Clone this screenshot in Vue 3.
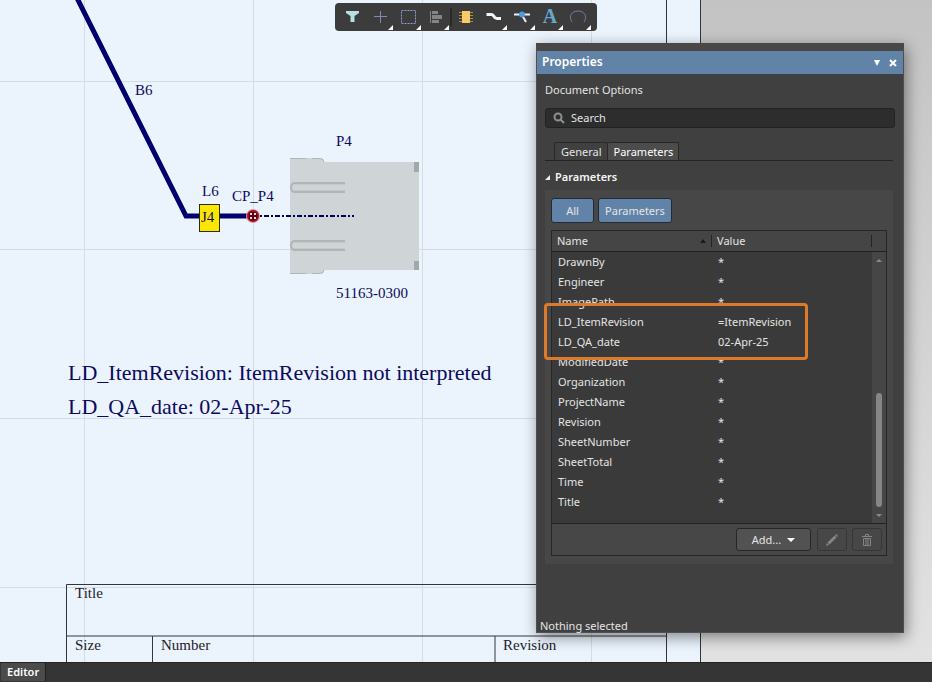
<script setup>
import { ref } from 'vue'

const search = ref('')
const activeTab = ref('Parameters')

const tabs = ['General', 'Parameters']

const tools = [
  { name: 'filter', menu: false },
  { name: 'move', menu: true },
  { name: 'select', menu: true },
  { name: 'align', menu: true },
  { name: 'part', menu: false, divider: true },
  { name: 'wire', menu: true },
  { name: 'split', menu: true },
  { name: 'text', menu: true },
  { name: 'arc', menu: true }
]

const parameters = [
  { name: 'DrawnBy', value: '*' },
  { name: 'Engineer', value: '*' },
  { name: 'ImagePath', value: '*' },
  { name: 'LD_ItemRevision', value: '=ItemRevision' },
  { name: 'LD_QA_date', value: '02-Apr-25' },
  { name: 'ModifiedDate', value: '*' },
  { name: 'Organization', value: '*' },
  { name: 'ProjectName', value: '*' },
  { name: 'Revision', value: '*' },
  { name: 'SheetNumber', value: '*' },
  { name: 'SheetTotal', value: '*' },
  { name: 'Time', value: '*' },
  { name: 'Title', value: '*' }
]

const gridX = [84, 253, 422, 591]
const gridY = [81, 249, 418, 587]
</script>

<template>
  <div class="app">
    <main class="workspace">
      <svg class="sheet">
        <rect class="paper" x="0" y="-10" width="700" height="2000" />
        <g class="grid">
          <line v-for="x in gridX" :key="'x' + x" :x1="x + 0.5" y1="0" :x2="x + 0.5" y2="2000" />
          <line v-for="y in gridY" :key="'y' + y" x1="0" :y1="y + 0.5" x2="666" :y2="y + 0.5" />
        </g>

        <!-- sheet border and title block -->
        <g class="border">
          <path d="M666.5 0V2000M700.5 0V2000" />
          <path d="M66.5 2000V584.5H666.5M66.5 636H666.5M152.5 636V2000M495 636V2000" />
        </g>
        <g class="block-text">
          <text x="75" y="598">Title</text>
          <text x="75" y="650">Size</text>
          <text x="161" y="650">Number</text>
          <text x="503" y="650">Revision</text>
        </g>

        <!-- connector -->
        <path class="housing" d="M290 158H320Q324 158 324 162H419V270H324Q324 274 320 274H290Z" />
        <path class="edge" d="M290 158.500H306M312 158.500H320Q324 159 324 162M290 273.500H306M312 273.500H320Q324 273 324 270" />
        <g class="slot">
          <path d="M345 183H294Q291 184 291 187.500Q291 191 294 192H345" />
          <path d="M345 241H294Q291 242 291 245.500Q291 249 294 250H345" />
          <path class="shade" d="M345 184.500H295M345 190.500H293M345 242.500H295M345 248.500H293" />
        </g>
        <path class="peg" d="M414 162h5v10h-5zM414 261h5v9h-5z" />

        <!-- harness bundle -->
        <path class="bundle" d="M76 -4L186 216H253" />
        <path class="link" d="M260 216H354" />
        <rect class="label-box" x="199.500" y="204.500" width="20" height="27" />
        <circle class="halo" cx="253" cy="216" r="7" />
        <circle class="point" cx="253" cy="216" r="5" />
        <path class="point-dots" d="M250 213h2v2h-2zM254 213h2v2h-2zM250 217h2v2h-2zM254 217h2v2h-2z" />

        <g class="net-text">
          <text x="135" y="95">B6</text>
          <text x="202" y="196">L6</text>
          <text x="201" y="222">J4</text>
          <text x="232" y="201">CP_P4</text>
          <text x="336" y="146">P4</text>
          <text x="336" y="298">51163-0300</text>
        </g>
        <g class="note">
          <text x="68" y="380">LD_ItemRevision: ItemRevision not interpreted</text>
          <text x="68" y="414">LD_QA_date: 02-Apr-25</text>
        </g>
      </svg>

      <div class="toolbar">
        <template v-for="tool in tools" :key="tool.name">
          <span v-if="tool.divider" class="divider"></span>
          <button type="button" class="tool" :class="{ 'has-menu': tool.menu }" :aria-label="tool.name">
            <svg width="20" height="20" viewBox="0 0 20 20" fill="none">
              <path v-if="tool.name === 'filter'" d="M4 4H17V6L12.500 9V15H8.500V9L4 6Z" fill="#b5e0e4" />
              <path v-else-if="tool.name === 'move'" d="M10.500 4V16M4 9.500H17" stroke="#8288ba" />
              <rect v-else-if="tool.name === 'select'" x="3.500" y="3.500" width="14" height="13" stroke="#8c9fce" stroke-dasharray="2 1" />
              <g v-else-if="tool.name === 'align'" fill="#858585">
                <path d="M4 4h1v12h-1zM6 4h6v3h-6zM6 8h10v4h-10zM6 13h7v3h-7z" />
              </g>
              <g v-else-if="tool.name === 'part'">
                <path d="M3 5.500H17M3 8.500H17M3 11.500H17M3 14.500H17" stroke="#a98b45" />
                <rect x="6" y="4" width="8" height="12" fill="#f8cb68" />
              </g>
              <path v-else-if="tool.name === 'wire'" d="M2.500 7.500H7.500Q9 7.500 10 9.500Q11 11.500 13 11.500H17" stroke="#f5f5f5" stroke-width="3" />
              <g v-else-if="tool.name === 'split'">
                <path d="M2 7.500H18M10 8L14 15" stroke="#f0f0f0" stroke-width="2" />
                <circle cx="10" cy="7.500" r="3" fill="#4a9ae8" />
              </g>
              <text v-else-if="tool.name === 'text'" class="tool-letter" x="10" y="16" text-anchor="middle">A</text>
              <path v-else d="M4 15C0 9 4 4 10 4S20 9 16 15" stroke="#737aa8" />
            </svg>
          </button>
        </template>
      </div>

      <section class="panel">
        <header class="panel-title">
          <h1>Properties</h1>
          <button type="button" class="title-button" aria-label="Panel menu">
            <svg width="8" height="6" viewBox="0 0 8 6"><path d="M1 0H7L4 6Z" fill="#fff" /></svg>
          </button>
          <button type="button" class="title-button" aria-label="Close">
            <svg width="8" height="8" viewBox="0 0 8 8"><path d="M1 1L7 7M7 1L1 7" stroke="#fff" stroke-width="2" /></svg>
          </button>
        </header>

        <div class="panel-body">
          <p class="subject">Document Options</p>

          <label class="search">
            <svg width="12" height="12" viewBox="0 0 12 12" fill="none" stroke="#8f8f8f" stroke-width="2">
              <circle cx="5" cy="5" r="3.500" />
              <path d="M7.500 7.500L11 11" />
            </svg>
            <input v-model="search" type="text" placeholder="Search" aria-label="Search" />
          </label>

          <nav class="tabs">
            <button
              v-for="tab in tabs"
              :key="tab"
              type="button"
              class="tab"
              :class="{ active: tab === activeTab }"
              @click="activeTab = tab"
            >
              {{ tab }}
            </button>
          </nav>

          <h2 class="section-title">
            <svg width="5" height="5" viewBox="0 0 5 5"><path d="M5 0V5H0Z" fill="#eee" /></svg>
            Parameters
          </h2>

          <div class="group">
            <div class="filters">
              <button type="button" class="filter">All</button>
              <button type="button" class="filter wide">Parameters</button>
            </div>

            <div class="grid-box">
              <div class="list">
                <table>
                  <thead>
                    <tr>
                      <th class="col-name">
                        <span class="head">
                          Name
                          <svg width="6" height="4" viewBox="0 0 6 4"><path d="M0 4L3 0L6 4Z" fill="#1c1c1c" /></svg>
                        </span>
                      </th>
                      <th><span class="head">Value</span></th>
                    </tr>
                  </thead>
                  <tbody>
                    <tr v-for="item in parameters" :key="item.name">
                      <td>{{ item.name }}</td>
                      <td>{{ item.value }}</td>
                    </tr>
                  </tbody>
                </table>
                <div class="scrollbar">
                  <svg width="6" height="3" viewBox="0 0 6 3"><path d="M0 3L3 0L6 3Z" fill="#8a8a8a" /></svg>
                  <span class="thumb"></span>
                  <svg width="6" height="3" viewBox="0 0 6 3"><path d="M0 0H6L3 3Z" fill="#8a8a8a" /></svg>
                </div>
                <div class="highlight"></div>
              </div>

              <footer class="actions">
                <button type="button" class="add">
                  Add...
                  <svg width="8" height="4" viewBox="0 0 8 4"><path d="M0 0H8L4 4Z" fill="#fff" /></svg>
                </button>
                <button type="button" class="icon-button" aria-label="Edit">
                  <svg width="12" height="12" viewBox="0 0 12 12" fill="#858585">
                    <path d="M0 12L1 9L3 11ZM1.500 8.500L8.500 1.500L10.500 3.500L3.500 10.500ZM9 1L10 0L12 2L11 3Z" />
                  </svg>
                </button>
                <button type="button" class="icon-button" aria-label="Delete">
                  <svg width="10" height="12" viewBox="0 0 10 12" fill="none" stroke="#858585">
                    <path d="M0 2.500H10M3.500 2V0.500H6.500V2M1.500 4.500H8.500V11.500H1.500ZM4 5V11M6 5V11" />
                  </svg>
                </button>
              </footer>
            </div>
          </div>

          <p class="selection">Nothing selected</p>
        </div>
      </section>
    </main>

    <footer class="statusbar">
      <button type="button" class="editor">Editor</button>
    </footer>
  </div>
</template>

<style>
body {
  margin: 0;
}
</style>

<style scoped>
* {
  box-sizing: border-box;
}

.app {
  display: flex;
  flex-direction: column;
  height: 100vh;
  overflow: hidden;
  font-family: "Noto Sans", "Open Sans", sans-serif;
  font-size: 11px;
  line-height: 16px;
  color: #e4e4e4;
}

button,
input {
  font: inherit;
  color: inherit;
  padding: 0;
  border: 0;
  background: none;
}

h1,
h2,
p {
  margin: 0;
  font-size: inherit;
}

.workspace {
  position: relative;
  flex: 1;
  min-height: 0;
  background: linear-gradient(#c3c3c3, #e2e2e2);
}

/* drawing sheet */
.sheet {
  display: block;
  width: 100%;
  height: 100%;
  font-family: "Liberation Serif", serif;
}

.paper {
  fill: #ebf3fd;
}

.grid {
  stroke: #d6dce4;
}

.border {
  fill: none;
  stroke: #34343c;
}

.block-text {
  font-size: 15px;
  fill: #1c1c28;
}

.net-text {
  font-size: 15px;
  fill: #0b0b5e;
}

.note {
  font-size: 22px;
  fill: #0b0b5e;
}

.housing {
  fill: #cfd5d7;
}

.edge,
.slot {
  fill: none;
  stroke: #b0b5b7;
}

.slot {
  stroke-width: 2;
}

.shade {
  stroke: #c3c9cb;
  stroke-width: 1;
}

.peg {
  fill: #a2a7a9;
}

.bundle {
  fill: none;
  stroke: #00006e;
  stroke-width: 5;
}

.link {
  stroke: #00005e;
  stroke-width: 2;
  stroke-dasharray: 2 2 5 2;
}

.label-box {
  fill: #fbe600;
  stroke: #2c2c14;
}

.halo {
  fill: #d99aa2;
}

.point {
  fill: #5c0012;
  stroke: #8e1020;
  stroke-width: 2;
}

.point-dots {
  fill: #f3d6da;
}

/* floating toolbar */
.toolbar {
  position: absolute;
  top: 3px;
  left: 0;
  right: 0;
  width: 262px;
  margin: 0 auto;
  padding: 0 5px 0 3px;
  display: flex;
  height: 28px;
  border-radius: 4px;
  background: #3c3c3c;
}

.tool {
  position: relative;
  width: 28px;
  display: flex;
  align-items: center;
  justify-content: center;
}

.tool svg {
  overflow: visible;
}

.has-menu::after {
  content: "";
  position: absolute;
  right: 1px;
  bottom: 1px;
  border-left: 5px solid transparent;
  border-bottom: 5px solid #fff;
}

.divider {
  width: 2px;
  margin: 5px 0;
  background: #282828;
}

.tool-letter {
  font-family: "Liberation Serif", serif;
  font-size: 20px;
  font-weight: bold;
  fill: #68a6cf;
}

/* properties panel */
.panel {
  position: absolute;
  top: 43px;
  right: 28px;
  width: 368px;
  display: flex;
  flex-direction: column;
  border: 1px solid #505050;
  border-top: 8px solid #4a4846;
  background: #404040;
  box-shadow: 2px 4px 14px rgba(0, 0, 0, 0.45);
}

.panel-title {
  display: flex;
  align-items: center;
  gap: 8px;
  height: 23px;
  padding: 0 6px 0 5px;
  background: #6183a8;
  color: #fff;
}

.panel-title h1 {
  flex: 1;
  font-size: 12px;
  font-weight: 600;
  line-height: 16px;
  padding-bottom: 2px;
}

.title-button {
  display: flex;
  width: 8px;
  justify-content: center;
}

.panel-body {
  display: flex;
  flex-direction: column;
  padding: 8px 8px 0;
}

.search {
  display: flex;
  align-items: center;
  gap: 6px;
  height: 20px;
  margin-top: 10px;
  padding: 0 7px;
  border: 1px solid #222;
  border-radius: 3px;
  background: #2d2d2d;
}

.search input {
  flex: 1;
  min-width: 0;
  outline: none;
}

.search input::placeholder {
  color: #e4e4e4;
  opacity: 1;
}

.tabs {
  display: flex;
  margin: 14px 2px 0 0;
  padding-left: 9px;
  border-bottom: 1px solid #242424;
}

.tab {
  height: 18px;
  padding: 0 5px 0 6px;
  border: 1px solid #282828;
  border-bottom: 0;
  border-radius: 2px 2px 0 0;
}

.tab + .tab {
  border-left: 0;
}

.tab.active {
  background: #4c4c4c;
  color: #fff;
}

.section-title {
  display: flex;
  align-items: center;
  gap: 5px;
  margin-top: 8px;
  font-weight: 600;
  color: #f6f6f6;
}

.group {
  margin: 5px 2px 0 0;
  padding: 8px 6px;
  background: #474747;
}

.filters {
  display: flex;
  gap: 4px;
}

.filter {
  width: 43px;
  height: 25px;
  border: 1px solid #222b34;
  border-radius: 3px;
  background: #6183a8;
}

.filter.wide {
  width: 74px;
}

.grid-box {
  margin-top: 7px;
  border: 1px solid #262626;
}

.list {
  position: relative;
  height: 293px;
  border-bottom: 1px solid #222;
  background: #3a3a3a;
}

table {
  width: 100%;
  border-collapse: collapse;
  table-layout: fixed;
}

thead {
  background: #454545;
}

th {
  height: 20px;
  padding: 0;
  border-bottom: 1px solid #222;
  font-weight: normal;
  text-align: left;
}

.col-name {
  width: 160px;
}

.head {
  display: flex;
  align-items: center;
  justify-content: space-between;
  height: 12px;
  margin-right: 14px;
  padding: 0 5px;
  border-right: 1px solid #242424;
}

.col-name .head {
  margin-right: 0;
}

td {
  height: 20px;
  padding: 2px 6px 0;
}

.scrollbar {
  position: absolute;
  top: 21px;
  right: 0;
  bottom: 0;
  width: 14px;
  display: flex;
  flex-direction: column;
  align-items: center;
  padding: 7px 0 6px;
  background: #464646;
}

.thumb {
  width: 6px;
  height: 114px;
  margin: auto 0 7px;
  border-radius: 3px;
  background: #868686;
}

.highlight {
  position: absolute;
  top: 72px;
  left: -8px;
  width: 264px;
  height: 57px;
  border: 3px solid #de7b2b;
  border-radius: 4px;
}

.actions {
  display: flex;
  align-items: center;
  justify-content: flex-end;
  gap: 5px;
  height: 31px;
  padding-right: 4px;
}

.add {
  display: flex;
  align-items: center;
  justify-content: center;
  gap: 6px;
  width: 75px;
  height: 23px;
  margin-right: 1px;
  border: 1px solid #262626;
  border-radius: 3px;
  background: #525252;
}

.icon-button {
  display: flex;
  align-items: center;
  justify-content: center;
  width: 30px;
  height: 23px;
  border: 1px solid #363636;
  border-radius: 3px;
}

.selection {
  height: 14px;
  margin: 54px 0 0 -5px;
}

/* status bar */
.statusbar {
  display: flex;
  height: 20px;
  padding: 0 0 1px 1px;
  border-top: 1px solid #242424;
  background: #353535;
}

.editor {
  padding: 0 6px 1px;
  border-right: 1px solid #222;
  background: #4b4b4b;
  color: #fff;
  font-weight: 600;
}
</style>
